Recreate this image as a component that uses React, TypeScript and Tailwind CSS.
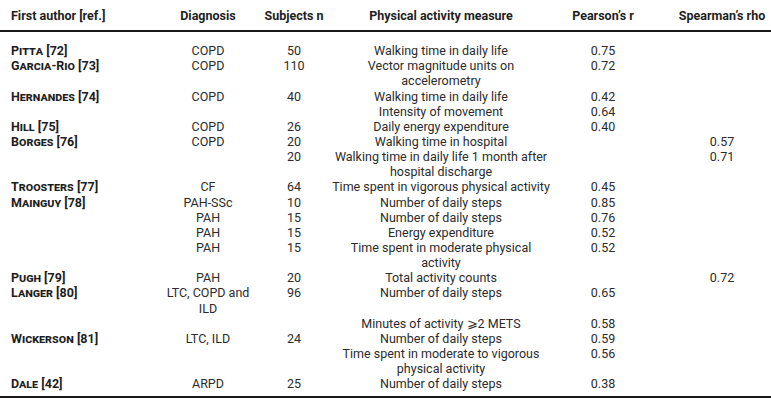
import React from "react";

type Row = {
  a?: string;
  ref?: string;
  d?: React.ReactNode;
  n?: string;
  m: React.ReactNode;
  p?: string;
  s?: string;
};

const rows: Row[] = [
  { a: "Pitta", ref: "[72]", d: "COPD", n: "50", m: "Walking time in daily life", p: "0.75" },
  { a: "Garcia-Rio", ref: "[73]", d: "COPD", n: "110", m: <>Vector magnitude units on<br />accelerometry</>, p: "0.72" },
  { a: "Hernandes", ref: "[74]", d: "COPD", n: "40", m: "Walking time in daily life", p: "0.42" },
  { m: "Intensity of movement", p: "0.64" },
  { a: "Hill", ref: "[75]", d: "COPD", n: "26", m: "Daily energy expenditure", p: "0.40" },
  { a: "Borges", ref: "[76]", d: "COPD", n: "20", m: "Walking time in hospital", s: "0.57" },
  { n: "20", m: <>Walking time in daily life 1 month after<br />hospital discharge</>, s: "0.71" },
  { a: "Troosters", ref: "[77]", d: "CF", n: "64", m: "Time spent in vigorous physical activity", p: "0.45" },
  { a: "Mainguy", ref: "[78]", d: "PAH-SSc", n: "10", m: "Number of daily steps", p: "0.85" },
  { d: "PAH", n: "15", m: "Number of daily steps", p: "0.76" },
  { d: "PAH", n: "15", m: "Energy expenditure", p: "0.52" },
  { d: "PAH", n: "15", m: <>Time spent in moderate physical<br />activity</>, p: "0.52" },
  { a: "Pugh", ref: "[79]", d: "PAH", n: "20", m: "Total activity counts", s: "0.72" },
  { a: "Langer", ref: "[80]", d: <>LTC, COPD and<br />ILD</>, n: "96", m: "Number of daily steps", p: "0.65" },
  { m: "Minutes of activity \u2A7E2 METS", p: "0.58" },
  { a: "Wickerson", ref: "[81]", d: "LTC, ILD", n: "24", m: "Number of daily steps", p: "0.59" },
  { m: <>Time spent in moderate to vigorous<br />physical activity</>, p: "0.56" },
  { a: "Dale", ref: "[42]", d: "ARPD", n: "25", m: "Number of daily steps", p: "0.38" },
];

const cols = "grid grid-cols-[160px_96px_76px_218px_106px_115px]";

export default function App() {
  return (
    <div
      className="w-[771px] h-[401px] bg-white text-[#2b2b2b] text-[12.5px] leading-[15.14px]"
      style={{ fontFamily: "Roboto, 'Liberation Sans', sans-serif" }}
    >
      <div className={`${cols} pt-[8px] pb-[7px] font-bold text-[#1e1e1e] whitespace-nowrap`}>
        <div className="pl-[11px]">First author [ref.]</div>
        <div className="text-center">Diagnosis</div>
        <div className="text-center">Subjects n</div>
        <div className="text-center">Physical activity measure</div>
        <div className="text-center">Pearson’s r</div>
        <div className="text-center pl-[17px]">Spearman’s rho</div>
      </div>
      <div className="h-[2px] bg-[#1a1a1a]" />
      <div className={`${cols} pt-[11px] pb-[5px] whitespace-nowrap`}>
        {rows.map((r, i) => (
          <React.Fragment key={i}>
            <div className="pl-[11px] font-bold text-[#1e1e1e]">
              {r.a && (
                <>
                  <span className="[font-variant-caps:small-caps]">{r.a}</span> {r.ref}
                </>
              )}
            </div>
            <div className="text-center">{r.d}</div>
            <div className="text-center">{r.n}</div>
            <div className="text-center">{r.m}</div>
            <div className="text-center">{r.p}</div>
            <div className="text-center pl-[17px]">{r.s}</div>
          </React.Fragment>
        ))}
      </div>
      <div className="h-[2px] bg-[#1a1a1a]" />
    </div>
  );
}
